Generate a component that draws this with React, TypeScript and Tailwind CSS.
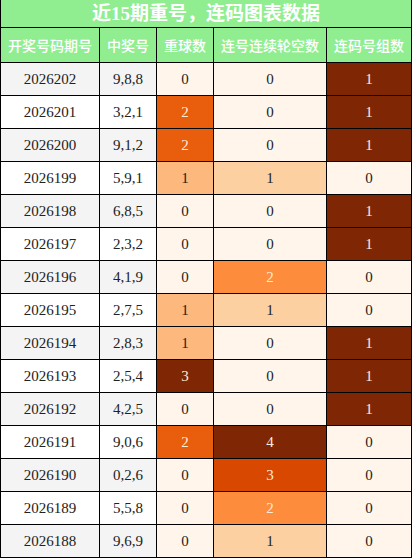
import React from "react";

type Row = [string, string, number, number, number];

const rows: Row[] = [
  ["2026202", "9,8,8", 0, 0, 1],
  ["2026201", "3,2,1", 2, 0, 1],
  ["2026200", "9,1,2", 2, 0, 1],
  ["2026199", "5,9,1", 1, 1, 0],
  ["2026198", "6,8,5", 0, 0, 1],
  ["2026197", "2,3,2", 0, 0, 1],
  ["2026196", "4,1,9", 0, 2, 0],
  ["2026195", "2,7,5", 1, 1, 0],
  ["2026194", "2,8,3", 1, 0, 1],
  ["2026193", "2,5,4", 3, 0, 1],
  ["2026192", "4,2,5", 0, 0, 1],
  ["2026191", "9,0,6", 2, 4, 0],
  ["2026190", "0,2,6", 0, 3, 0],
  ["2026189", "5,5,8", 0, 2, 0],
  ["2026188", "9,6,9", 0, 1, 0],
];

const c3: Record<number, string> = {
  0: "bg-[#fff5eb] text-[#222]",
  1: "bg-[#fdb97d] text-[#222]",
  2: "bg-[#e95e0d] text-[#fdebd9]",
  3: "bg-[#7f2704] text-[#fdebd9]",
};
const c4: Record<number, string> = {
  0: "bg-[#fff5eb] text-[#222]",
  1: "bg-[#fdd0a2] text-[#222]",
  2: "bg-[#fd8d3c] text-[#fdebd9]",
  3: "bg-[#d94801] text-[#fdebd9]",
  4: "bg-[#7f2704] text-[#fdebd9]",
};
const c5: Record<number, string> = {
  0: "bg-[#fff5eb] text-[#222]",
  1: "bg-[#7f2704] text-[#fdebd9]",
};

const cell = "flex items-center justify-center border-r border-b border-black";
const grid = "grid grid-cols-[99px_57px_57px_113px_85px]";

export default function App() {
  return (
    <div
      className="w-[412px] h-[559px] bg-white overflow-hidden"
      style={{ fontFamily: '"Liberation Serif", "Noto Sans CJK SC", serif' }}
    >
      <div className="border-l border-black">
        <div className="h-[28px] flex items-center justify-center bg-[#90ee90] border-r border-b border-black text-white font-bold text-[19px] leading-none">
          近15期重号，连码图表数据
        </div>
        <div className={`${grid} h-[35px] bg-[#90ee90] text-white text-[14px] font-medium`} style={{ fontFamily: '"Noto Sans CJK SC", sans-serif' }}>
          <div className={cell}>开奖号码期号</div>
          <div className={cell}>中奖号</div>
          <div className={cell}>重球数</div>
          <div className={cell}>连号连续轮空数</div>
          <div className={cell}>连码号组数</div>
        </div>
        {rows.map((r, i) => {
          const bg = i % 2 === 0 ? "bg-[#f4f4f4]" : "bg-white";
          return (
            <div key={r[0]} className={`${grid} h-[33px] text-[15px] text-[#222]`}>
              <div className={`${cell} ${bg}`}>{r[0]}</div>
              <div className={`${cell} ${bg}`}>{r[1]}</div>
              <div className={`${cell} ${c3[r[2]]}`}>{r[2]}</div>
              <div className={`${cell} ${c4[r[3]]}`}>{r[3]}</div>
              <div className={`${cell} ${c5[r[4]]}`}>{r[4]}</div>
            </div>
          );
        })}
      </div>
    </div>
  );
}
